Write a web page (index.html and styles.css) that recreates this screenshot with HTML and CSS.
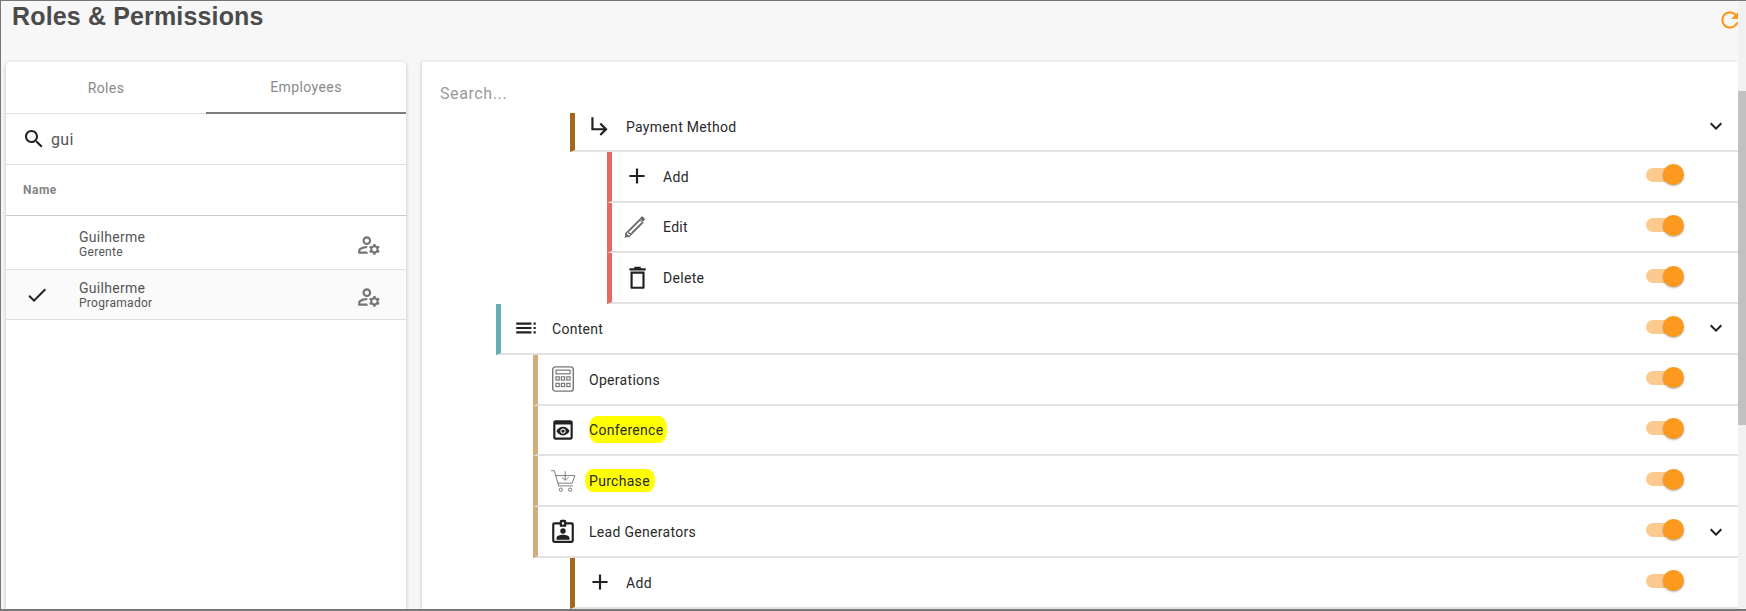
FILE: index.html
```html
<!DOCTYPE html>
<html lang="en">
<head>
<meta charset="utf-8">
<title>Roles &amp; Permissions</title>
<link rel="stylesheet" href="styles.css">
</head>
<body>
<div class="frame">
  <div class="app">
    <header class="topbar">
      <h1 class="title">Roles &amp; Permissions</h1>
      <svg class="refresh" viewBox="0 0 24 24"><path d="M17.65 6.35C16.2 4.9 14.21 4 12 4c-4.42 0-7.99 3.58-7.99 8s3.57 8 7.99 8c3.73 0 6.84-2.55 7.73-6h-2.08c-.82 2.33-3.04 4-5.65 4-3.31 0-6-2.69-6-6s2.69-6 6-6c1.66 0 3.14.69 4.22 1.78L13 11h7V4l-2.35 2.35z"/></svg>
    </header>
    <main class="columns">
      <aside class="card">
        <div class="tabs">
          <div class="tab">Roles</div>
          <div class="tab active">Employees</div>
        </div>
        <div class="filter">
          <svg class="ico-search" viewBox="0 0 24 24"><path d="M15.5 14h-.79l-.28-.27C15.41 12.59 16 11.11 16 9.5 16 5.91 13.09 3 9.5 3S3 5.91 3 9.5 5.91 16 9.5 16c1.61 0 3.09-.59 4.23-1.57l.27.28v.79l5 4.99L20.49 19l-4.99-5zm-6 0C7.01 14 5 11.99 5 9.5S7.01 5 9.5 5 14 7.01 14 9.5 11.99 14 9.5 14z"/></svg>
          <span class="filter-text">gui</span>
        </div>
        <div class="thead">Name</div>
        <div class="person">
          <div class="check"></div>
          <div class="who"><div class="who-name">Guilherme</div><div class="who-role">Gerente</div></div>
          <svg class="ico-manage" viewBox="0 0 24 24"><path d="M4 18v-.65c0-.34.16-.66.41-.81C6.1 15.53 8.03 15 10 15c.03 0 .05 0 .08.01.1-.7.3-1.37.59-1.98-.22-.02-.44-.03-.67-.03-2.42 0-4.68.67-6.61 1.82-.88.52-1.39 1.5-1.39 2.53V20h9.26c-.42-.6-.75-1.28-.97-2H4zM10 12c2.21 0 4-1.79 4-4s-1.79-4-4-4-4 1.79-4 4 1.79 4 4 4zm0-6c1.1 0 2 .9 2 2s-.9 2-2 2-2-.9-2-2 .9-2 2-2zM20.75 16c0-.22-.03-.42-.06-.63l1.14-1.01-1-1.73-1.45.49c-.32-.27-.68-.48-1.08-.63L18 11h-2l-.3 1.49c-.4.15-.76.36-1.08.63l-1.45-.49-1 1.73 1.14 1.01c-.03.21-.06.41-.06.63s.03.42.06.63l-1.14 1.01 1 1.73 1.45-.49c.32.27.68.48 1.08.63L16 21h2l.3-1.49c.4-.15.76-.36 1.08-.63l1.45.49 1-1.73-1.14-1.01c.03-.21.06-.41.06-.63zM17 18c-1.1 0-2-.9-2-2s.9-2 2-2 2 .9 2 2-.9 2-2 2z"/></svg>
        </div>
        <div class="person selected">
          <div class="check"><svg class="ico-check" viewBox="0 0 24 24"><path d="M9 16.17L4.83 12l-1.42 1.41L9 19 21 7l-1.41-1.41z"/></svg></div>
          <div class="who"><div class="who-name">Guilherme</div><div class="who-role">Programador</div></div>
          <svg class="ico-manage" viewBox="0 0 24 24"><path d="M4 18v-.65c0-.34.16-.66.41-.81C6.1 15.53 8.03 15 10 15c.03 0 .05 0 .08.01.1-.7.3-1.37.59-1.98-.22-.02-.44-.03-.67-.03-2.42 0-4.68.67-6.61 1.82-.88.52-1.39 1.5-1.39 2.53V20h9.26c-.42-.6-.75-1.28-.97-2H4zM10 12c2.21 0 4-1.79 4-4s-1.79-4-4-4-4 1.79-4 4 1.79 4 4 4zm0-6c1.1 0 2 .9 2 2s-.9 2-2 2-2-.9-2-2 .9-2 2-2zM20.75 16c0-.22-.03-.42-.06-.63l1.14-1.01-1-1.73-1.45.49c-.32-.27-.68-.48-1.08-.63L18 11h-2l-.3 1.49c-.4.15-.76.36-1.08.63l-1.45-.49-1 1.73 1.14 1.01c-.03.21-.06.41-.06.63s.03.42.06.63l-1.14 1.01 1 1.73 1.45-.49c.32.27.68.48 1.08.63L16 21h2l.3-1.49c.4-.15.76-.36 1.08-.63l1.45.49 1-1.73-1.14-1.01c.03-.21-.06-.41-.06-.63zM17 18c-1.1 0-2-.9-2-2s.9-2 2-2 2 .9 2 2-.9 2-2 2z"/></svg>
        </div>
      </aside>
      <section class="panel">
        <div class="panel-search">Search...</div>
        <div class="tree">
          <div class="node l3 c-brown first">
            <svg class="ico" viewBox="0 0 24 24"><path d="M19 15l-6 6-1.42-1.42L15.17 16H4V4h2v10h9.17l-3.59-3.58L13 9l6 6z"/></svg>
            <span class="label">Payment Method</span>
            <svg class="chev" viewBox="0 0 24 24"><path d="M16.59 8.59L12 13.17 7.41 8.59 6 10l6 6 6-6z"/></svg>
          </div>
          <div class="node l4 c-red">
            <svg class="ico" viewBox="0 0 24 24"><path d="M19 13h-6v6h-2v-6H5v-2h6V5h2v6h6v2z"/></svg>
            <span class="label">Add</span>
            <span class="toggle"></span><span class="chev-slot"></span>
          </div>
          <div class="node l4 c-red">
            <svg class="ico" viewBox="0 0 24 24"><g transform="translate(-2 .5)"><g fill="none" stroke="#666" stroke-width="1"><path d="M3.5 17.5L16.5 4.5l3 3-13 13z"/><path d="M5 16l1.5 0 0 1.500 1.500 0 0 1.500M7 15L17 5M9 17L18.500 7.500"/></g><path fill="#666" d="M16.500 3.500l1.500-1.500a1 1 0 0 1 1.400 0l1.600 1.600a1 1 0 0 1 0 1.400l-1.500 1.500zM2.500 21.500l1-4 3 3z"/></g></svg>
            <span class="label">Edit</span>
            <span class="toggle"></span><span class="chev-slot"></span>
          </div>
          <div class="node l4 c-red">
            <svg class="ico" viewBox="0 0 24 24"><path d="M6 6h13v15a1 1 0 0 1-1 1H7a1 1 0 0 1-1-1zm2 2v12h9V8zM5 3h15v2H5zM9.500 1.500h6V3h-6z"/></svg>
            <span class="label">Delete</span>
            <span class="toggle"></span><span class="chev-slot"></span>
          </div>
          <div class="node l1 c-teal">
            <svg class="ico" viewBox="0 0 24 24"><path d="M3 9h14V7H3v2zm0 4h14v-2H3v2zm0 4h14v-2H3v2zm16 0h2v-2h-2v2zm0-10v2h2V7h-2zm0 6h2v-2h-2v2z"/></svg>
            <span class="label">Content</span>
            <span class="toggle"></span>
            <svg class="chev" viewBox="0 0 24 24"><path d="M16.59 8.59L12 13.17 7.41 8.59 6 10l6 6 6-6z"/></svg>
          </div>
          <div class="node l2 c-tan">
            <svg class="ico" viewBox="0 0 24 24"><rect x="2.500" y="0.800" width="19" height="22.400" rx="2.500" fill="none" stroke="#777" stroke-width="1.300"/><rect x="5.500" y="3.800" width="13" height="3.400" fill="none" stroke="#777" stroke-width="1.100"/><g fill="none" stroke="#777" stroke-width="1.100"><rect x="5.500" y="10" width="3" height="3"/><rect x="10.500" y="10" width="3" height="3"/><rect x="15.500" y="10" width="3" height="3"/><rect x="5.500" y="16" width="3" height="3"/><rect x="10.500" y="16" width="3" height="3"/><rect x="15.500" y="16" width="3" height="3"/></g></svg>
            <span class="label">Operations</span>
            <span class="toggle"></span><span class="chev-slot"></span>
          </div>
          <div class="node l2 c-tan">
            <svg class="ico" viewBox="0 0 24 24"><path d="M19 3H5c-1.110 0-2 .9-2 2v14c0 1.100.89 2 2 2h14c1.100 0 2-.9 2-2V5c0-1.100-.89-2-2-2zm0 16H5V7h14v12zm-5.500-6c0 .83-.67 1.500-1.500 1.500s-1.500-.67-1.500-1.500.67-1.500 1.500-1.500 1.500.67 1.500 1.500zM12 9c-2.730 0-5.060 1.660-6 4 .94 2.340 3.270 4 6 4s5.060-1.660 6-4c-.94-2.340-3.270-4-6-4zm0 6.500c-1.380 0-2.500-1.120-2.500-2.500s1.120-2.500 2.500-2.500 2.500 1.120 2.500 2.500-1.120 2.500-2.500 2.500z"/></svg>
            <span class="label"><span class="mark">Conference</span></span>
            <span class="toggle"></span><span class="chev-slot"></span>
          </div>
          <div class="node l2 c-tan">
            <svg class="ico" viewBox="0 0 24 24"><g fill="none" stroke="#555" stroke-width=".7"><path d="M1 2.500h3l4 14h13"/><path d="M5 7h18l-2.500 7H7.200"/><circle cx="10" cy="20" r="1.500"/><circle cx="18.500" cy="20" r="1.500"/><path d="M14 3v8M11 8.500l3 3 3-3"/></g></svg>
            <span class="label"><span class="mark mark-b">Purchase</span></span>
            <span class="toggle"></span><span class="chev-slot"></span>
          </div>
          <div class="node l2 c-tan">
            <svg class="ico" viewBox="0 0 24 24"><path d="M20 4h-5V3a1.500 1.500 0 0 0-1.500-1.500h-3A1.500 1.500 0 0 0 9 3v1H4a2 2 0 0 0-2 2v15a2 2 0 0 0 2 2h16a2 2 0 0 0 2-2V6a2 2 0 0 0-2-2zm0 17H4V6h5v2h6V6h5zM11 4h2v2h-2zM12 9.500a2.500 2.500 0 1 0 0 5 2.500 2.500 0 0 0 0-5zm0 6c-2.500 0-6 1.100-6 3V20h12v-1.500c0-1.900-3.500-3-6-3z"/></svg>
            <span class="label">Lead Generators</span>
            <span class="toggle"></span>
            <svg class="chev chev-low" viewBox="0 0 24 24"><path d="M16.59 8.59L12 13.17 7.41 8.59 6 10l6 6 6-6z"/></svg>
          </div>
          <div class="node l3 c-brown">
            <svg class="ico" viewBox="0 0 24 24"><path d="M19 13h-6v6h-2v-6H5v-2h6V5h2v6h6v2z"/></svg>
            <span class="label">Add</span>
            <span class="toggle"></span><span class="chev-slot"></span>
          </div>
          <div class="node l3 c-brown"></div>
        </div>
      </section>
    </main>
  </div>
  <div class="scrollbar"><div class="thumb"></div></div>
</div>
</body>
</html>
```

FILE: styles.css
```css
* { box-sizing: border-box; }
html, body { margin: 0; padding: 0; height: 100%; overflow: hidden; }
body { font-family: Roboto, "Liberation Sans", sans-serif; font-size: 14px; letter-spacing: .3px; color: #212121; background: #fff; }

.frame {
  display: flex;
  height: 611px;
  border-top: 1px solid #777;
  border-left: 1px solid #777;
  border-bottom: 2px solid #777;
  overflow: hidden;
}
.app { flex: 1; min-width: 0; display: flex; flex-direction: column; background: #f7f7f7; }

.topbar { height: 61px; flex: none; display: flex; justify-content: space-between; align-items: flex-start; overflow: hidden; }
.title {
  margin: 0 0 0 11px;
  font: bold 25px/30px "Liberation Sans", Arial, sans-serif;
  letter-spacing: .15px;
  color: #4b4b4b;
}
.refresh { width: 26px; height: 26px; fill: #fb9a1f; margin: 6px -5px 0 0; flex: none; }

.columns { flex: 1; min-height: 0; display: flex; }

.card {
  width: 400px;
  margin-left: 5px;
  flex: none;
  background: #fff;
  border-radius: 4px 4px 0 0;
  box-shadow: 0 1px 4px rgba(0,0,0,.22);
}
.tabs { display: flex; height: 52px; border-bottom: 1px solid #e0e0e0; }
.tab {
  flex: 1;
  display: flex;
  align-items: center;
  justify-content: center;
  color: #8a8a8a;
  font-size: 14px;
  letter-spacing: .4px;
}
.tab.active { border-bottom: 2px solid #7d7d7d; margin-bottom: -1px; }

.filter { height: 51px; display: flex; align-items: center; padding-left: 16px; border-bottom: 1px solid #e0e0e0; }
.ico-search { width: 24px; height: 24px; fill: #212121; flex: none; }
.filter-text { margin-left: 5px; font-size: 16px; color: #555; }

.thead {
  height: 51px;
  display: flex;
  align-items: center;
  padding-left: 17px;
  font-size: 12px;
  font-weight: 700;
  letter-spacing: .5px;
  color: #858585;
  border-bottom: 1px solid #c9c9c9;
}
.person { height: 54px; display: flex; align-items: center; border-bottom: 1px solid #e0e0e0; }
.person + .person { height: 50px; }
.thead + .person .who { padding-top: 4px; }
.person.selected { background: #fafafa; }
.check { width: 73px; flex: none; padding-left: 19px; display: flex; }
.ico-check { width: 24px; height: 24px; fill: #212121; }
.who { flex: 1; padding-top: 2px; }
.who-name { font-size: 14px; line-height: 15px; color: #555; }
.who-role { font-size: 12px; line-height: 14px; color: #555; }
.ico-manage { width: 26px; height: 26px; fill: #757575; margin: 4px 24px 0 0; flex: none; }

.panel {
  flex: 1;
  min-width: 0;
  margin-left: 16px;
  background: #fff;
  display: flex;
  flex-direction: column;
  box-shadow: -1px 0 3px rgba(0,0,0,.14);
}
.panel-search {
  height: 51px;
  flex: none;
  padding: 22px 0 0 18px;
  font-size: 16px;
  line-height: 20px;
  letter-spacing: .6px;
  color: #9a9a9a;
}
.tree { flex: 1; min-height: 0; overflow: hidden; }
.node {
  height: 50.75px;
  display: flex;
  align-items: center;
  background: #fff;
  border-left: 5px solid;
  border-bottom: 2px solid #e2e2e2;
  padding-left: 12px;
  padding-right: 10px;
}
.first { margin-top: -12px; padding-top: 2px; }
.l1 { margin-left: 74px; }
.l2 { margin-left: 111px; }
.l3 { margin-left: 148px; }
.l4 { margin-left: 185px; }
.c-brown { border-left-color: #a2681c; }
.c-red { border-left-color: #e46a61; }
.c-teal { border-left-color: #64adb2; }
.c-tan { border-left-color: #d2ab7e; }

.ico { width: 26px; height: 26px; fill: #212121; flex: none; overflow: visible; }
.label { margin-left: 13px; padding-top: 1px; flex: 1; color: #2a2a2a; }
.mark { background: #ffff00; padding: 6px 4px 5px 0; border-radius: 8px / 12px; }
.mark-b { padding: 4px 5px 3px 4px; margin-left: -4px; }

.toggle {
  position: relative;
  width: 34px;
  height: 14px;
  margin: -3px 24px 0 0;
  border-radius: 7px;
  background: #fcca8e;
  flex: none;
}
.toggle::after {
  content: "";
  position: absolute;
  right: -4px;
  top: -3.5px;
  width: 21px;
  height: 21px;
  border-radius: 50%;
  background: #fb9a1f;
  box-shadow: 0 1px 2px rgba(0,0,0,.3);
}
.chev, .chev-slot { width: 24px; height: 24px; flex: none; fill: #212121; }
.chev-low { margin-top: 2px; }

.scrollbar { width: 8px; flex: none; background: #f1f1f1; }
.thumb { height: 334px; margin-top: 90px; background: #c1c1c1; }
```
